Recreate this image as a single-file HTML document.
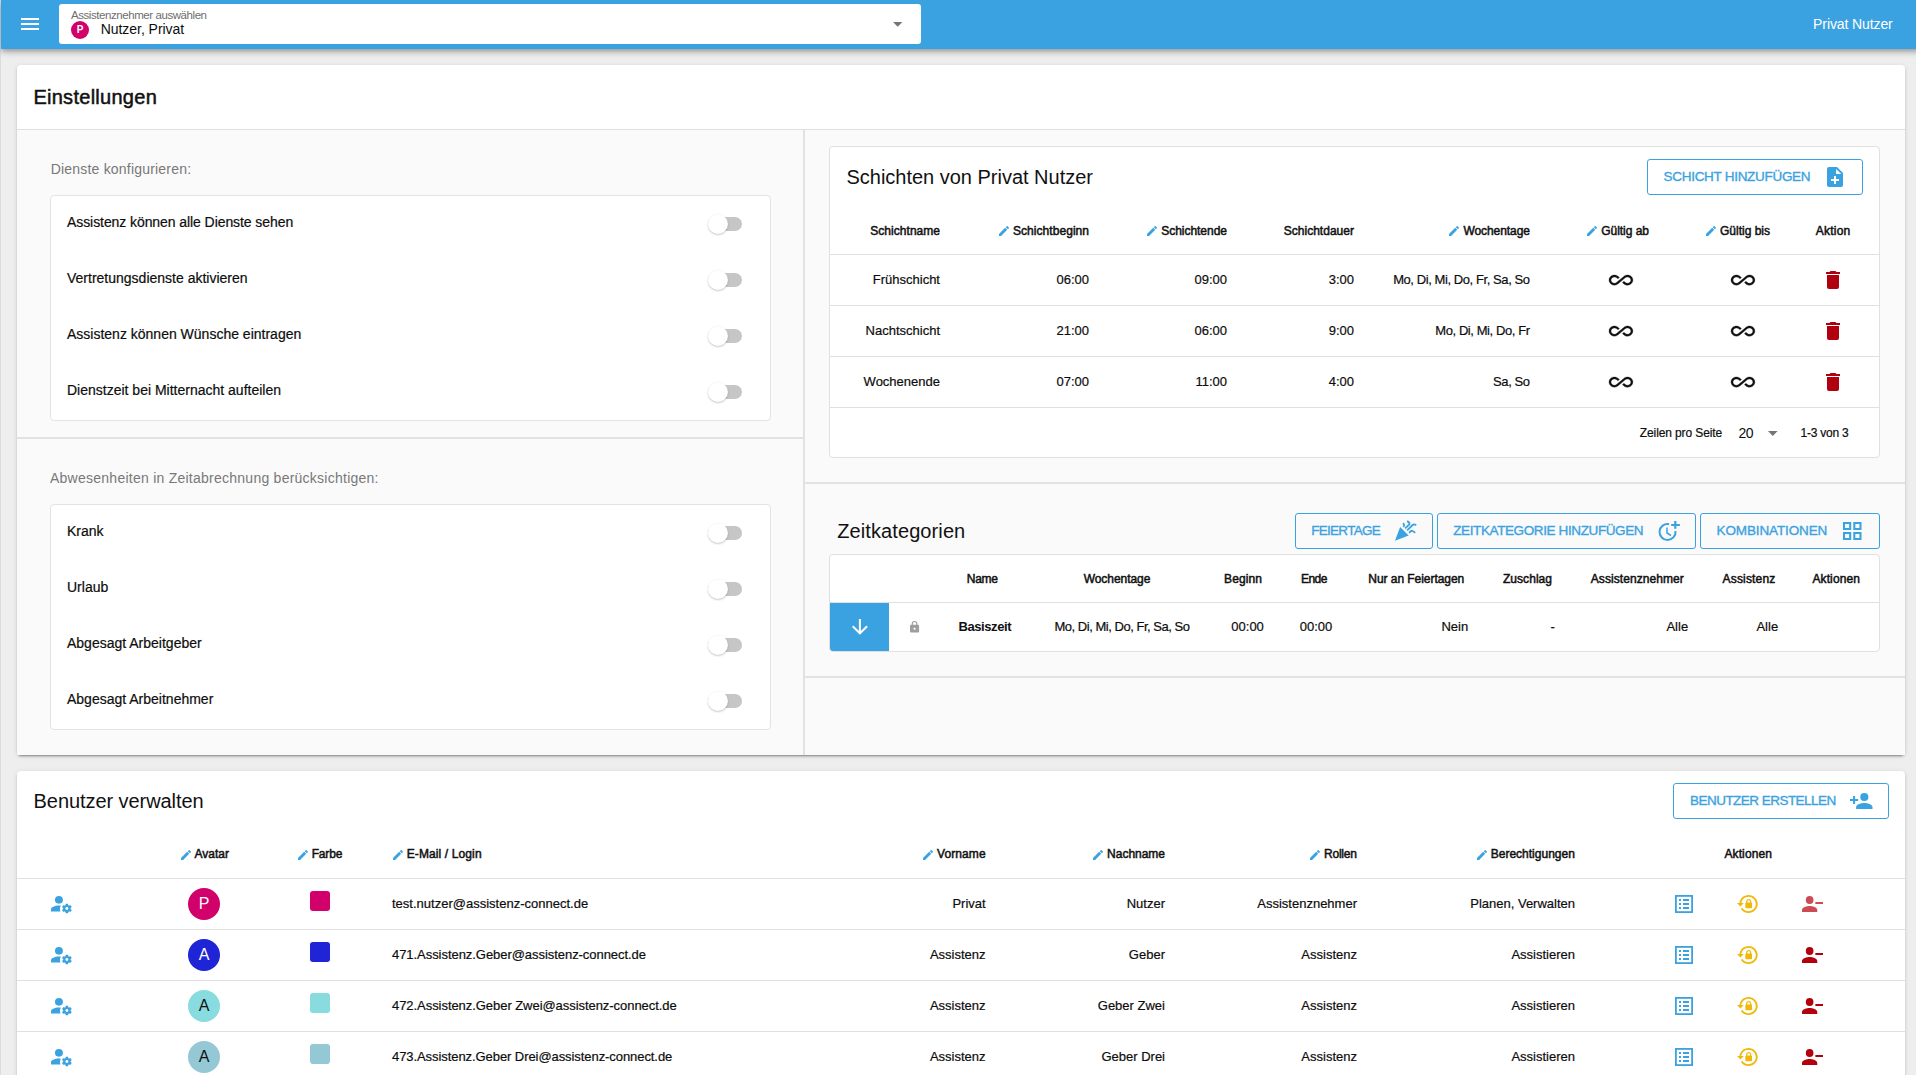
<!DOCTYPE html><html><head><meta charset="utf-8"><style>
html,body{margin:0;padding:0;}
body{width:1916px;height:1075px;overflow:hidden;position:relative;background:#eeeeee;font-family:"Liberation Sans",sans-serif;}
.t{position:absolute;white-space:nowrap;line-height:1;}
.tog{position:absolute;}
</style></head><body>
<div style="position:absolute;left:0px;top:0px;width:1px;height:1075px;background:#d6dde3;"></div>
<div style="position:absolute;left:1px;top:0px;width:1940px;height:49px;background:#3ba2e1;box-shadow:0 2px 4px -1px rgba(0,0,0,.2),0 4px 5px 0 rgba(0,0,0,.14),0 1px 10px 0 rgba(0,0,0,.12);z-index:5;"></div>
<div style="position:absolute;left:0;top:0;width:1916px;height:48px;z-index:6;">
<svg style="position:absolute;left:21.00px;top:18.00px;overflow:visible;" width="18.00" height="12.00" viewBox="3 6 18 12" preserveAspectRatio="none"><path fill="#ffffff" fill-rule="evenodd" stroke="none" stroke-width="0" d="M3,6H21V8H3V6M3,11H21V13H3V11M3,16H21V18H3V16Z"/></svg>
<div style="position:absolute;left:59px;top:4px;width:862px;height:40px;background:#fff;border-radius:3px;"></div>
<div class="t" style="left:71.00px;top:9.57px;font-size:11.5px;letter-spacing:-0.433px;color:#6e6e6e;">Assistenznehmer auswählen</div>
<div style="position:absolute;left:71px;top:21px;width:18px;height:18px;background:#d1006a;border-radius:50%;"></div>
<div class="t" style="left:76.67px;top:25.04px;font-size:10px;letter-spacing:0.000px;color:#fff;font-weight:700;">P</div>
<div class="t" style="left:100.70px;top:22.05px;font-size:14px;letter-spacing:-0.038px;color:#0d0d0d;-webkit-text-stroke:0;">Nutzer, Privat</div>
<svg style="position:absolute;left:892.80px;top:22.00px;overflow:visible;" width="9.40" height="4.80" viewBox="7 10 10 5" preserveAspectRatio="none"><path fill="#757575" fill-rule="evenodd" stroke="none" stroke-width="0" d="M7,10L12,15L17,10H7Z"/></svg>
<div class="t" style="left:1813.10px;top:17.15px;font-size:14px;letter-spacing:-0.102px;color:#ffffff;">Privat Nutzer</div>
</div>
<div style="position:absolute;left:17px;top:65px;width:1888px;height:690px;background:#fff;border-radius:4px;box-shadow:0 3px 1px -2px rgba(0,0,0,.2),0 2px 2px 0 rgba(0,0,0,.14),0 1px 5px 0 rgba(0,0,0,.12);"></div>
<div class="t" style="left:33.40px;top:87.07px;font-size:20px;letter-spacing:0.275px;color:#111;-webkit-text-stroke:0.5px #111;">Einstellungen</div>
<div style="position:absolute;left:17px;top:129px;width:1888px;height:626px;background:#fafafa;border-top:1px solid #e0e0e0;border-radius:0;box-sizing:border-box;"></div>
<div style="position:absolute;left:803px;top:130px;width:2px;height:625px;background:#e2e2e2;"></div>
<div style="position:absolute;left:17px;top:437px;width:786px;height:2px;background:#e2e2e2;"></div>
<div style="position:absolute;left:805px;top:482px;width:1100px;height:2px;background:#e2e2e2;"></div>
<div style="position:absolute;left:805px;top:676px;width:1100px;height:2px;background:#e2e2e2;"></div>
<div class="t" style="left:50.70px;top:161.95px;font-size:14px;letter-spacing:0.199px;color:#787878;">Dienste konfigurieren:</div>
<div style="position:absolute;left:50px;top:195px;width:721px;height:226px;background:#fff;border:1px solid #e3e3e3;border-radius:4px;box-sizing:border-box;"></div>
<div class="t" style="left:67.00px;top:215.15px;font-size:14px;letter-spacing:-0.077px;color:#0d0d0d;-webkit-text-stroke:0.2px #0d0d0d;">Assistenz können alle Dienste sehen</div>
<div style="position:absolute;left:712px;top:217px;width:30px;height:14px;background:#c6c6c6;border-radius:7px;"></div>
<div style="position:absolute;left:708px;top:214px;width:20px;height:20px;background:#fff;border-radius:50%;box-shadow:0 1px 2px rgba(0,0,0,.22),0 0 1px rgba(0,0,0,.06);"></div>
<div class="t" style="left:67.00px;top:271.15px;font-size:14px;letter-spacing:0.000px;color:#0d0d0d;-webkit-text-stroke:0.2px #0d0d0d;">Vertretungsdienste aktivieren</div>
<div style="position:absolute;left:712px;top:273px;width:30px;height:14px;background:#c6c6c6;border-radius:7px;"></div>
<div style="position:absolute;left:708px;top:270px;width:20px;height:20px;background:#fff;border-radius:50%;box-shadow:0 1px 2px rgba(0,0,0,.22),0 0 1px rgba(0,0,0,.06);"></div>
<div class="t" style="left:67.00px;top:327.15px;font-size:14px;letter-spacing:0.000px;color:#0d0d0d;-webkit-text-stroke:0.2px #0d0d0d;">Assistenz können Wünsche eintragen</div>
<div style="position:absolute;left:712px;top:329px;width:30px;height:14px;background:#c6c6c6;border-radius:7px;"></div>
<div style="position:absolute;left:708px;top:326px;width:20px;height:20px;background:#fff;border-radius:50%;box-shadow:0 1px 2px rgba(0,0,0,.22),0 0 1px rgba(0,0,0,.06);"></div>
<div class="t" style="left:67.00px;top:383.15px;font-size:14px;letter-spacing:0.000px;color:#0d0d0d;-webkit-text-stroke:0.2px #0d0d0d;">Dienstzeit bei Mitternacht aufteilen</div>
<div style="position:absolute;left:712px;top:385px;width:30px;height:14px;background:#c6c6c6;border-radius:7px;"></div>
<div style="position:absolute;left:708px;top:382px;width:20px;height:20px;background:#fff;border-radius:50%;box-shadow:0 1px 2px rgba(0,0,0,.22),0 0 1px rgba(0,0,0,.06);"></div>
<div class="t" style="left:50.00px;top:470.85px;font-size:14px;letter-spacing:0.250px;color:#787878;">Abwesenheiten in Zeitabrechnung berücksichtigen:</div>
<div style="position:absolute;left:50px;top:504px;width:721px;height:226px;background:#fff;border:1px solid #e3e3e3;border-radius:4px;box-sizing:border-box;"></div>
<div class="t" style="left:67.00px;top:524.15px;font-size:14px;letter-spacing:0.000px;color:#0d0d0d;-webkit-text-stroke:0.2px #0d0d0d;">Krank</div>
<div style="position:absolute;left:712px;top:526px;width:30px;height:14px;background:#c6c6c6;border-radius:7px;"></div>
<div style="position:absolute;left:708px;top:523px;width:20px;height:20px;background:#fff;border-radius:50%;box-shadow:0 1px 2px rgba(0,0,0,.22),0 0 1px rgba(0,0,0,.06);"></div>
<div class="t" style="left:67.00px;top:580.15px;font-size:14px;letter-spacing:0.000px;color:#0d0d0d;-webkit-text-stroke:0.2px #0d0d0d;">Urlaub</div>
<div style="position:absolute;left:712px;top:582px;width:30px;height:14px;background:#c6c6c6;border-radius:7px;"></div>
<div style="position:absolute;left:708px;top:579px;width:20px;height:20px;background:#fff;border-radius:50%;box-shadow:0 1px 2px rgba(0,0,0,.22),0 0 1px rgba(0,0,0,.06);"></div>
<div class="t" style="left:67.00px;top:636.15px;font-size:14px;letter-spacing:0.000px;color:#0d0d0d;-webkit-text-stroke:0.2px #0d0d0d;">Abgesagt Arbeitgeber</div>
<div style="position:absolute;left:712px;top:638px;width:30px;height:14px;background:#c6c6c6;border-radius:7px;"></div>
<div style="position:absolute;left:708px;top:635px;width:20px;height:20px;background:#fff;border-radius:50%;box-shadow:0 1px 2px rgba(0,0,0,.22),0 0 1px rgba(0,0,0,.06);"></div>
<div class="t" style="left:67.00px;top:692.15px;font-size:14px;letter-spacing:0.000px;color:#0d0d0d;-webkit-text-stroke:0.2px #0d0d0d;">Abgesagt Arbeitnehmer</div>
<div style="position:absolute;left:712px;top:694px;width:30px;height:14px;background:#c6c6c6;border-radius:7px;"></div>
<div style="position:absolute;left:708px;top:691px;width:20px;height:20px;background:#fff;border-radius:50%;box-shadow:0 1px 2px rgba(0,0,0,.22),0 0 1px rgba(0,0,0,.06);"></div>
<div style="position:absolute;left:829px;top:146px;width:1051px;height:312px;background:#fff;border:1px solid #e0e0e0;border-radius:4px;box-sizing:border-box;"></div>
<div class="t" style="left:846.50px;top:167.07px;font-size:20px;letter-spacing:-0.012px;color:#111;">Schichten von Privat Nutzer</div>
<div style="position:absolute;left:1647px;top:159px;width:216px;height:36px;border:1px solid #3ba2e1;border-radius:3px;box-sizing:border-box;"></div>
<div class="t" style="left:1663.60px;top:169.87px;font-size:13.5px;letter-spacing:-0.295px;color:#3ba2e1;-webkit-text-stroke:0.35px #3ba2e1;">SCHICHT HINZUFÜGEN</div>
<svg style="position:absolute;left:1827px;top:167px" width="16" height="20" viewBox="0 0 16 20"><path fill="#3ba2e1" d="M2,0H10L16,6V18A2,2 0 0,1 14,20H2A2,2 0 0,1 0,18V2A2,2 0 0,1 2,0Z"/><path fill="#fff" d="M7,9H9V12H12V14H9V17H7V14H4V12H7Z"/><path fill="#fff" d="M9.1,1.9V6.9H14.3Z"/></svg>
<div class="t" style="left:870.30px;top:224.64px;font-size:12px;letter-spacing:0.034px;color:#111;-webkit-text-stroke:0.5px #111;">Schichtname</div>
<svg style="position:absolute;left:998.60px;top:226.00px;overflow:visible;" width="10.00" height="10.00" viewBox="3 3.0 18.0 18.0" preserveAspectRatio="none"><path fill="#3ba2e1" fill-rule="evenodd" stroke="none" stroke-width="0" d="M20.71,7.04C21.1,6.65 21.1,6 20.71,5.63L18.37,3.29C18,2.9 17.35,2.9 16.96,3.29L15.12,5.12L18.87,8.87M3,17.25V21H6.75L17.81,9.93L14.06,6.18L3,17.25Z"/></svg>
<div class="t" style="left:1013.00px;top:224.64px;font-size:12px;letter-spacing:0.053px;color:#111;-webkit-text-stroke:0.5px #111;">Schichtbeginn</div>
<svg style="position:absolute;left:1147.00px;top:226.00px;overflow:visible;" width="10.00" height="10.00" viewBox="3 3.0 18.0 18.0" preserveAspectRatio="none"><path fill="#3ba2e1" fill-rule="evenodd" stroke="none" stroke-width="0" d="M20.71,7.04C21.1,6.65 21.1,6 20.71,5.63L18.37,3.29C18,2.9 17.35,2.9 16.96,3.29L15.12,5.12L18.87,8.87M3,17.25V21H6.75L17.81,9.93L14.06,6.18L3,17.25Z"/></svg>
<div class="t" style="left:1161.20px;top:224.64px;font-size:12px;letter-spacing:-0.026px;color:#111;-webkit-text-stroke:0.5px #111;">Schichtende</div>
<div class="t" style="left:1283.70px;top:224.64px;font-size:12px;letter-spacing:0.025px;color:#111;-webkit-text-stroke:0.5px #111;">Schichtdauer</div>
<svg style="position:absolute;left:1449.30px;top:226.00px;overflow:visible;" width="10.00" height="10.00" viewBox="3 3.0 18.0 18.0" preserveAspectRatio="none"><path fill="#3ba2e1" fill-rule="evenodd" stroke="none" stroke-width="0" d="M20.71,7.04C21.1,6.65 21.1,6 20.71,5.63L18.37,3.29C18,2.9 17.35,2.9 16.96,3.29L15.12,5.12L18.87,8.87M3,17.25V21H6.75L17.81,9.93L14.06,6.18L3,17.25Z"/></svg>
<div class="t" style="left:1463.40px;top:224.64px;font-size:12px;letter-spacing:-0.060px;color:#111;-webkit-text-stroke:0.5px #111;">Wochentage</div>
<svg style="position:absolute;left:1587.00px;top:226.00px;overflow:visible;" width="10.00" height="10.00" viewBox="3 3.0 18.0 18.0" preserveAspectRatio="none"><path fill="#3ba2e1" fill-rule="evenodd" stroke="none" stroke-width="0" d="M20.71,7.04C21.1,6.65 21.1,6 20.71,5.63L18.37,3.29C18,2.9 17.35,2.9 16.96,3.29L15.12,5.12L18.87,8.87M3,17.25V21H6.75L17.81,9.93L14.06,6.18L3,17.25Z"/></svg>
<div class="t" style="left:1601.30px;top:224.64px;font-size:12px;letter-spacing:-0.045px;color:#111;-webkit-text-stroke:0.5px #111;">Gültig ab</div>
<svg style="position:absolute;left:1706.00px;top:226.00px;overflow:visible;" width="10.00" height="10.00" viewBox="3 3.0 18.0 18.0" preserveAspectRatio="none"><path fill="#3ba2e1" fill-rule="evenodd" stroke="none" stroke-width="0" d="M20.71,7.04C21.1,6.65 21.1,6 20.71,5.63L18.37,3.29C18,2.9 17.35,2.9 16.96,3.29L15.12,5.12L18.87,8.87M3,17.25V21H6.75L17.81,9.93L14.06,6.18L3,17.25Z"/></svg>
<div class="t" style="left:1720.00px;top:224.64px;font-size:12px;letter-spacing:-0.004px;color:#111;-webkit-text-stroke:0.5px #111;">Gültig bis</div>
<div class="t" style="left:1815.80px;top:224.64px;font-size:12px;letter-spacing:0.208px;color:#111;-webkit-text-stroke:0.5px #111;">Aktion</div>
<div style="position:absolute;left:830px;top:254px;width:1049px;height:1px;background:#e0e0e0;"></div>
<div style="position:absolute;left:830px;top:305px;width:1049px;height:1px;background:#e0e0e0;"></div>
<div style="position:absolute;left:830px;top:356px;width:1049px;height:1px;background:#e0e0e0;"></div>
<div style="position:absolute;left:830px;top:407px;width:1049px;height:1px;background:#e0e0e0;"></div>
<div class="t" style="left:872.79px;top:273.00px;font-size:13px;letter-spacing:0.000px;color:#0d0d0d;-webkit-text-stroke:0.2px #0d0d0d;">Frühschicht</div>
<div class="t" style="left:1056.43px;top:273.00px;font-size:13px;letter-spacing:0.000px;color:#0d0d0d;-webkit-text-stroke:0.2px #0d0d0d;">06:00</div>
<div class="t" style="left:1194.43px;top:273.00px;font-size:13px;letter-spacing:0.000px;color:#0d0d0d;-webkit-text-stroke:0.2px #0d0d0d;">09:00</div>
<div class="t" style="left:1328.71px;top:273.00px;font-size:13px;letter-spacing:0.000px;color:#0d0d0d;-webkit-text-stroke:0.2px #0d0d0d;">3:00</div>
<div class="t" style="left:1393.14px;top:273.00px;font-size:13px;letter-spacing:-0.420px;color:#0d0d0d;-webkit-text-stroke:0.2px #0d0d0d;">Mo, Di, Mi, Do, Fr, Sa, So</div>
<svg style="position:absolute;left:1609.10px;top:274.70px;overflow:visible;" width="23.90" height="10.20" viewBox="0 6.62 24 10.759999999999998" preserveAspectRatio="none"><path fill="#111" fill-rule="evenodd" stroke="#111" stroke-width="0.35" d="M18.6,6.62C17.16,6.62 15.8,7.18 14.83,8.15L7.8,14.39C7.16,15.03 6.31,15.38 5.4,15.38C3.53,15.38 2,13.87 2,12C2,10.13 3.53,8.62 5.4,8.62C6.31,8.62 7.16,8.97 7.84,9.65L8.97,10.65L10.5,9.31L9.22,8.2C8.2,7.18 6.84,6.62 5.4,6.62C2.42,6.62 0,9.04 0,12C0,14.96 2.42,17.38 5.4,17.38C6.84,17.38 8.2,16.82 9.17,15.85L16.2,9.61C16.84,8.97 17.69,8.62 18.6,8.62C20.47,8.62 22,10.13 22,12C22,13.87 20.47,15.38 18.6,15.38C17.7,15.38 16.84,15.03 16.16,14.35L15,13.34L13.5,14.68L14.78,15.8C15.8,16.81 17.15,17.37 18.6,17.37C21.58,17.37 24,14.96 24,12C24,9 21.58,6.62 18.6,6.62Z"/></svg>
<svg style="position:absolute;left:1731.10px;top:274.70px;overflow:visible;" width="23.90" height="10.20" viewBox="0 6.62 24 10.759999999999998" preserveAspectRatio="none"><path fill="#111" fill-rule="evenodd" stroke="#111" stroke-width="0.35" d="M18.6,6.62C17.16,6.62 15.8,7.18 14.83,8.15L7.8,14.39C7.16,15.03 6.31,15.38 5.4,15.38C3.53,15.38 2,13.87 2,12C2,10.13 3.53,8.62 5.4,8.62C6.31,8.62 7.16,8.97 7.84,9.65L8.97,10.65L10.5,9.31L9.22,8.2C8.2,7.18 6.84,6.62 5.4,6.62C2.42,6.62 0,9.04 0,12C0,14.96 2.42,17.38 5.4,17.38C6.84,17.38 8.2,16.82 9.17,15.85L16.2,9.61C16.84,8.97 17.69,8.62 18.6,8.62C20.47,8.62 22,10.13 22,12C22,13.87 20.47,15.38 18.6,15.38C17.7,15.38 16.84,15.03 16.16,14.35L15,13.34L13.5,14.68L14.78,15.8C15.8,16.81 17.15,17.37 18.6,17.37C21.58,17.37 24,14.96 24,12C24,9 21.58,6.62 18.6,6.62Z"/></svg>
<svg style="position:absolute;left:1826.00px;top:271.00px;overflow:visible;" width="14.00" height="18.00" viewBox="5 3 14 18" preserveAspectRatio="none"><path fill="#b0000f" fill-rule="evenodd" stroke="none" stroke-width="0" d="M19,4H15.5L14.5,3H9.5L8.5,4H5V6H19M6,19A2,2 0 0,0 8,21H16A2,2 0 0,0 18,19V7H6V19Z"/></svg>
<div class="t" style="left:865.58px;top:324.00px;font-size:13px;letter-spacing:0.000px;color:#0d0d0d;-webkit-text-stroke:0.2px #0d0d0d;">Nachtschicht</div>
<div class="t" style="left:1056.43px;top:324.00px;font-size:13px;letter-spacing:0.000px;color:#0d0d0d;-webkit-text-stroke:0.2px #0d0d0d;">21:00</div>
<div class="t" style="left:1194.43px;top:324.00px;font-size:13px;letter-spacing:0.000px;color:#0d0d0d;-webkit-text-stroke:0.2px #0d0d0d;">06:00</div>
<div class="t" style="left:1328.71px;top:324.00px;font-size:13px;letter-spacing:0.000px;color:#0d0d0d;-webkit-text-stroke:0.2px #0d0d0d;">9:00</div>
<div class="t" style="left:1435.29px;top:324.00px;font-size:13px;letter-spacing:-0.420px;color:#0d0d0d;-webkit-text-stroke:0.2px #0d0d0d;">Mo, Di, Mi, Do, Fr</div>
<svg style="position:absolute;left:1609.10px;top:325.70px;overflow:visible;" width="23.90" height="10.20" viewBox="0 6.62 24 10.759999999999998" preserveAspectRatio="none"><path fill="#111" fill-rule="evenodd" stroke="#111" stroke-width="0.35" d="M18.6,6.62C17.16,6.62 15.8,7.18 14.83,8.15L7.8,14.39C7.16,15.03 6.31,15.38 5.4,15.38C3.53,15.38 2,13.87 2,12C2,10.13 3.53,8.62 5.4,8.62C6.31,8.62 7.16,8.97 7.84,9.65L8.97,10.65L10.5,9.31L9.22,8.2C8.2,7.18 6.84,6.62 5.4,6.62C2.42,6.62 0,9.04 0,12C0,14.96 2.42,17.38 5.4,17.38C6.84,17.38 8.2,16.82 9.17,15.85L16.2,9.61C16.84,8.97 17.69,8.62 18.6,8.62C20.47,8.62 22,10.13 22,12C22,13.87 20.47,15.38 18.6,15.38C17.7,15.38 16.84,15.03 16.16,14.35L15,13.34L13.5,14.68L14.78,15.8C15.8,16.81 17.15,17.37 18.6,17.37C21.58,17.37 24,14.96 24,12C24,9 21.58,6.62 18.6,6.62Z"/></svg>
<svg style="position:absolute;left:1731.10px;top:325.70px;overflow:visible;" width="23.90" height="10.20" viewBox="0 6.62 24 10.759999999999998" preserveAspectRatio="none"><path fill="#111" fill-rule="evenodd" stroke="#111" stroke-width="0.35" d="M18.6,6.62C17.16,6.62 15.8,7.18 14.83,8.15L7.8,14.39C7.16,15.03 6.31,15.38 5.4,15.38C3.53,15.38 2,13.87 2,12C2,10.13 3.53,8.62 5.4,8.62C6.31,8.62 7.16,8.97 7.84,9.65L8.97,10.65L10.5,9.31L9.22,8.2C8.2,7.18 6.84,6.62 5.4,6.62C2.42,6.62 0,9.04 0,12C0,14.96 2.42,17.38 5.4,17.38C6.84,17.38 8.2,16.82 9.17,15.85L16.2,9.61C16.84,8.97 17.69,8.62 18.6,8.62C20.47,8.62 22,10.13 22,12C22,13.87 20.47,15.38 18.6,15.38C17.7,15.38 16.84,15.03 16.16,14.35L15,13.34L13.5,14.68L14.78,15.8C15.8,16.81 17.15,17.37 18.6,17.37C21.58,17.37 24,14.96 24,12C24,9 21.58,6.62 18.6,6.62Z"/></svg>
<svg style="position:absolute;left:1826.00px;top:322.00px;overflow:visible;" width="14.00" height="18.00" viewBox="5 3 14 18" preserveAspectRatio="none"><path fill="#b0000f" fill-rule="evenodd" stroke="none" stroke-width="0" d="M19,4H15.5L14.5,3H9.5L8.5,4H5V6H19M6,19A2,2 0 0,0 8,21H16A2,2 0 0,0 18,19V7H6V19Z"/></svg>
<div class="t" style="left:863.62px;top:375.00px;font-size:13px;letter-spacing:0.000px;color:#0d0d0d;-webkit-text-stroke:0.2px #0d0d0d;">Wochenende</div>
<div class="t" style="left:1056.43px;top:375.00px;font-size:13px;letter-spacing:0.000px;color:#0d0d0d;-webkit-text-stroke:0.2px #0d0d0d;">07:00</div>
<div class="t" style="left:1195.41px;top:375.00px;font-size:13px;letter-spacing:0.000px;color:#0d0d0d;-webkit-text-stroke:0.2px #0d0d0d;">11:00</div>
<div class="t" style="left:1328.71px;top:375.00px;font-size:13px;letter-spacing:0.000px;color:#0d0d0d;-webkit-text-stroke:0.2px #0d0d0d;">4:00</div>
<div class="t" style="left:1493.10px;top:375.00px;font-size:13px;letter-spacing:-0.420px;color:#0d0d0d;-webkit-text-stroke:0.2px #0d0d0d;">Sa, So</div>
<svg style="position:absolute;left:1609.10px;top:376.70px;overflow:visible;" width="23.90" height="10.20" viewBox="0 6.62 24 10.759999999999998" preserveAspectRatio="none"><path fill="#111" fill-rule="evenodd" stroke="#111" stroke-width="0.35" d="M18.6,6.62C17.16,6.62 15.8,7.18 14.83,8.15L7.8,14.39C7.16,15.03 6.31,15.38 5.4,15.38C3.53,15.38 2,13.87 2,12C2,10.13 3.53,8.62 5.4,8.62C6.31,8.62 7.16,8.97 7.84,9.65L8.97,10.65L10.5,9.31L9.22,8.2C8.2,7.18 6.84,6.62 5.4,6.62C2.42,6.62 0,9.04 0,12C0,14.96 2.42,17.38 5.4,17.38C6.84,17.38 8.2,16.82 9.17,15.85L16.2,9.61C16.84,8.97 17.69,8.62 18.6,8.62C20.47,8.62 22,10.13 22,12C22,13.87 20.47,15.38 18.6,15.38C17.7,15.38 16.84,15.03 16.16,14.35L15,13.34L13.5,14.68L14.78,15.8C15.8,16.81 17.15,17.37 18.6,17.37C21.58,17.37 24,14.96 24,12C24,9 21.58,6.62 18.6,6.62Z"/></svg>
<svg style="position:absolute;left:1731.10px;top:376.70px;overflow:visible;" width="23.90" height="10.20" viewBox="0 6.62 24 10.759999999999998" preserveAspectRatio="none"><path fill="#111" fill-rule="evenodd" stroke="#111" stroke-width="0.35" d="M18.6,6.62C17.16,6.62 15.8,7.18 14.83,8.15L7.8,14.39C7.16,15.03 6.31,15.38 5.4,15.38C3.53,15.38 2,13.87 2,12C2,10.13 3.53,8.62 5.4,8.62C6.31,8.62 7.16,8.97 7.84,9.65L8.97,10.65L10.5,9.31L9.22,8.2C8.2,7.18 6.84,6.62 5.4,6.62C2.42,6.62 0,9.04 0,12C0,14.96 2.42,17.38 5.4,17.38C6.84,17.38 8.2,16.82 9.17,15.85L16.2,9.61C16.84,8.97 17.69,8.62 18.6,8.62C20.47,8.62 22,10.13 22,12C22,13.87 20.47,15.38 18.6,15.38C17.7,15.38 16.84,15.03 16.16,14.35L15,13.34L13.5,14.68L14.78,15.8C15.8,16.81 17.15,17.37 18.6,17.37C21.58,17.37 24,14.96 24,12C24,9 21.58,6.62 18.6,6.62Z"/></svg>
<svg style="position:absolute;left:1826.00px;top:373.00px;overflow:visible;" width="14.00" height="18.00" viewBox="5 3 14 18" preserveAspectRatio="none"><path fill="#b0000f" fill-rule="evenodd" stroke="none" stroke-width="0" d="M19,4H15.5L14.5,3H9.5L8.5,4H5V6H19M6,19A2,2 0 0,0 8,21H16A2,2 0 0,0 18,19V7H6V19Z"/></svg>
<div class="t" style="left:1639.80px;top:427.44px;font-size:12px;letter-spacing:-0.111px;color:#0d0d0d;-webkit-text-stroke:0.2px #0d0d0d;">Zeilen pro Seite</div>
<div class="t" style="left:1738.60px;top:425.75px;font-size:14px;letter-spacing:-0.540px;color:#0d0d0d;-webkit-text-stroke:0;">20</div>
<svg style="position:absolute;left:1767.70px;top:431.00px;overflow:visible;" width="9.60" height="5.00" viewBox="7 10 10 5" preserveAspectRatio="none"><path fill="#757575" fill-rule="evenodd" stroke="none" stroke-width="0" d="M7,10L12,15L17,10H7Z"/></svg>
<div class="t" style="left:1800.50px;top:427.44px;font-size:12px;letter-spacing:-0.230px;color:#0d0d0d;-webkit-text-stroke:0.2px #0d0d0d;">1-3 von 3</div>
<div class="t" style="left:837.20px;top:521.07px;font-size:20px;letter-spacing:0.100px;color:#111;">Zeitkategorien</div>
<div style="position:absolute;left:1295px;top:513px;width:138px;height:36px;border:1px solid #3ba2e1;border-radius:3px;box-sizing:border-box;"></div>
<div class="t" style="left:1311.20px;top:523.87px;font-size:13.5px;letter-spacing:-0.708px;color:#3ba2e1;-webkit-text-stroke:0.35px #3ba2e1;">FEIERTAGE</div>
<div style="position:absolute;left:1437px;top:513px;width:259px;height:36px;border:1px solid #3ba2e1;border-radius:3px;box-sizing:border-box;"></div>
<div class="t" style="left:1453.20px;top:523.87px;font-size:13.5px;letter-spacing:-0.385px;color:#3ba2e1;-webkit-text-stroke:0.35px #3ba2e1;">ZEITKATEGORIE HINZUFÜGEN</div>
<div style="position:absolute;left:1700px;top:513px;width:180px;height:36px;border:1px solid #3ba2e1;border-radius:3px;box-sizing:border-box;"></div>
<div class="t" style="left:1716.50px;top:523.87px;font-size:13.5px;letter-spacing:-0.121px;color:#3ba2e1;-webkit-text-stroke:0.35px #3ba2e1;">KOMBINATIONEN</div>
<svg style="position:absolute;left:1843.00px;top:522.00px;overflow:visible;" width="18.50" height="18.00" viewBox="3 3 18 18" preserveAspectRatio="none"><path fill="#3ba2e1" fill-rule="evenodd" stroke="none" stroke-width="0" d="M3,11H11V3H3M5,5H9V9H5M13,21H21V13H13M15,15H19V19H15M3,21H11V13H3M5,15H9V19H5M13,3V11H21V3M19,9H15V5H19Z"/></svg>
<svg style="position:absolute;left:1394px;top:520px;overflow:visible" width="24" height="22" viewBox="0 0 24 22"><path fill="#3ba2e1" d="M1,20.8L6.1,7.1L14.6,15.4Z"/><path fill="none" stroke="#3ba2e1" stroke-width="1.8" stroke-linecap="butt" d="M8.8,3.2C10.4,4 10.6,5.6 9.3,6.8M13.1,1.1C14.8,2 16,3.2 15.3,4.5L11.1,8.4M13.1,10.4L18.6,5C19.6,4.2 21,4.4 22.2,5.4M15.1,12.8C16.3,11.4 17.4,10.6 18.3,10.8C19.4,11 20.4,12 21.1,12.8"/></svg>
<svg style="position:absolute;left:1657px;top:520px" width="24" height="22" viewBox="0 0 24 22"><path fill="none" stroke="#3ba2e1" stroke-width="2" d="M18.5,11A8,8 0 1,1 12,4.1"/><path fill="none" stroke="#3ba2e1" stroke-width="1.5" d="M10,7.5V13L14,15.5"/><path fill="#3ba2e1" d="M17.2,1H19.4V3.9H22.9V5.9H19.4V8.7H17.2V5.9H14.2V3.9H17.2Z"/></svg>
<div style="position:absolute;left:829px;top:554px;width:1051px;height:98px;background:#fff;border:1px solid #e0e0e0;border-radius:4px;box-sizing:border-box;"></div>
<div style="position:absolute;left:830px;top:602px;width:1049px;height:1px;background:#e0e0e0;"></div>
<div class="t" style="left:966.75px;top:572.54px;font-size:12px;letter-spacing:-0.247px;color:#111;-webkit-text-stroke:0.5px #111;">Name</div>
<div class="t" style="left:1083.65px;top:572.54px;font-size:12px;letter-spacing:-0.049px;color:#111;-webkit-text-stroke:0.5px #111;">Wochentage</div>
<div class="t" style="left:1224.10px;top:572.54px;font-size:12px;letter-spacing:0.084px;color:#111;-webkit-text-stroke:0.5px #111;">Beginn</div>
<div class="t" style="left:1300.95px;top:572.54px;font-size:12px;letter-spacing:-0.507px;color:#111;-webkit-text-stroke:0.5px #111;">Ende</div>
<div class="t" style="left:1368.35px;top:572.54px;font-size:12px;letter-spacing:-0.051px;color:#111;-webkit-text-stroke:0.5px #111;">Nur an Feiertagen</div>
<div class="t" style="left:1502.95px;top:572.54px;font-size:12px;letter-spacing:0.054px;color:#111;-webkit-text-stroke:0.5px #111;">Zuschlag</div>
<div class="t" style="left:1590.75px;top:572.54px;font-size:12px;letter-spacing:0.076px;color:#111;-webkit-text-stroke:0.5px #111;">Assistenznehmer</div>
<div class="t" style="left:1722.55px;top:572.54px;font-size:12px;letter-spacing:0.168px;color:#111;-webkit-text-stroke:0.5px #111;">Assistenz</div>
<div class="t" style="left:1812.40px;top:572.54px;font-size:12px;letter-spacing:0.131px;color:#111;-webkit-text-stroke:0.5px #111;">Aktionen</div>
<div style="position:absolute;left:830px;top:603px;width:59px;height:48px;background:#3ba2e1;border-radius:0 0 0 3px;"></div>
<svg style="position:absolute;left:851.60px;top:618.80px;overflow:visible;" width="15.80" height="15.80" viewBox="4.08 4 15.840000000000002 15.84" preserveAspectRatio="none"><path fill="#fff" fill-rule="evenodd" stroke="none" stroke-width="0" d="M11,4H13V16L18.5,10.5L19.92,11.92L12,19.84L4.08,11.92L5.5,10.5L11,16V4Z"/></svg>
<svg style="position:absolute;left:909.90px;top:621.30px;overflow:visible;" width="9.10" height="11.60" viewBox="4 1 16 21" preserveAspectRatio="none"><path fill="#9e9e9e" fill-rule="evenodd" stroke="none" stroke-width="0" d="M12,17A2,2 0 0,0 14,15C14,13.89 13.1,13 12,13A2,2 0 0,0 10,15A2,2 0 0,0 12,17M18,8A2,2 0 0,1 20,10V20A2,2 0 0,1 18,22H6A2,2 0 0,1 4,20V10C4,8.89 4.9,8 6,8H7V6A5,5 0 0,1 12,1A5,5 0 0,1 17,6V8H18M12,3A3,3 0 0,0 9,6V8H15V6A3,3 0 0,0 12,3Z"/></svg>
<div class="t" style="left:958.50px;top:620.00px;font-size:13px;letter-spacing:-0.419px;color:#111;font-weight:700;">Basiszeit</div>
<div class="t" style="left:1054.45px;top:620.00px;font-size:13px;letter-spacing:-0.474px;color:#0d0d0d;-webkit-text-stroke:0.2px #0d0d0d;">Mo, Di, Mi, Do, Fr, Sa, So</div>
<div class="t" style="left:1231.32px;top:620.00px;font-size:13px;letter-spacing:0.000px;color:#0d0d0d;-webkit-text-stroke:0.2px #0d0d0d;">00:00</div>
<div class="t" style="left:1299.72px;top:620.00px;font-size:13px;letter-spacing:0.000px;color:#0d0d0d;-webkit-text-stroke:0.2px #0d0d0d;">00:00</div>
<div class="t" style="left:1441.44px;top:620.00px;font-size:13px;letter-spacing:0.000px;color:#0d0d0d;-webkit-text-stroke:0.2px #0d0d0d;">Nein</div>
<div class="t" style="left:1550.62px;top:620.00px;font-size:13px;letter-spacing:0.000px;color:#0d0d0d;-webkit-text-stroke:0.2px #0d0d0d;">-</div>
<div class="t" style="left:1666.44px;top:620.00px;font-size:13px;letter-spacing:0.000px;color:#0d0d0d;-webkit-text-stroke:0.2px #0d0d0d;">Alle</div>
<div class="t" style="left:1756.44px;top:620.00px;font-size:13px;letter-spacing:0.000px;color:#0d0d0d;-webkit-text-stroke:0.2px #0d0d0d;">Alle</div>
<div style="position:absolute;left:17px;top:771px;width:1888px;height:400px;background:#fff;border-radius:4px;box-shadow:0 3px 1px -2px rgba(0,0,0,.2),0 2px 2px 0 rgba(0,0,0,.14),0 1px 5px 0 rgba(0,0,0,.12);"></div>
<div class="t" style="left:33.60px;top:791.27px;font-size:20px;letter-spacing:-0.071px;color:#111;">Benutzer verwalten</div>
<div style="position:absolute;left:1673px;top:783px;width:216px;height:36px;border:1px solid #3ba2e1;border-radius:3px;box-sizing:border-box;"></div>
<div class="t" style="left:1690.00px;top:793.87px;font-size:13.5px;letter-spacing:-0.530px;color:#3ba2e1;-webkit-text-stroke:0.35px #3ba2e1;">BENUTZER ERSTELLEN</div>
<svg style="position:absolute;left:1850.00px;top:793.00px;overflow:visible;" width="22.50" height="16.00" viewBox="1 4 22 16" preserveAspectRatio="none"><path fill="#3ba2e1" fill-rule="evenodd" stroke="none" stroke-width="0" d="M15,14C12.33,14 7,15.33 7,18V20H23V18C23,15.33 17.67,14 15,14M6,10V7H4V10H1V12H4V15H6V12H9V10M15,12A4,4 0 0,0 19,8A4,4 0 0,0 15,4A4,4 0 0,0 11,8A4,4 0 0,0 15,12Z"/></svg>
<svg style="position:absolute;left:180.90px;top:850.00px;overflow:visible;" width="10.00" height="10.00" viewBox="3 3.0 18.0 18.0" preserveAspectRatio="none"><path fill="#3ba2e1" fill-rule="evenodd" stroke="none" stroke-width="0" d="M20.71,7.04C21.1,6.65 21.1,6 20.71,5.63L18.37,3.29C18,2.9 17.35,2.9 16.96,3.29L15.12,5.12L18.87,8.87M3,17.25V21H6.75L17.81,9.93L14.06,6.18L3,17.25Z"/></svg>
<div class="t" style="left:194.40px;top:848.44px;font-size:12px;letter-spacing:0.032px;color:#111;-webkit-text-stroke:0.5px #111;">Avatar</div>
<svg style="position:absolute;left:297.80px;top:850.00px;overflow:visible;" width="10.00" height="10.00" viewBox="3 3.0 18.0 18.0" preserveAspectRatio="none"><path fill="#3ba2e1" fill-rule="evenodd" stroke="none" stroke-width="0" d="M20.71,7.04C21.1,6.65 21.1,6 20.71,5.63L18.37,3.29C18,2.9 17.35,2.9 16.96,3.29L15.12,5.12L18.87,8.87M3,17.25V21H6.75L17.81,9.93L14.06,6.18L3,17.25Z"/></svg>
<div class="t" style="left:311.70px;top:848.44px;font-size:12px;letter-spacing:-0.180px;color:#111;-webkit-text-stroke:0.5px #111;">Farbe</div>
<svg style="position:absolute;left:392.80px;top:850.00px;overflow:visible;" width="10.00" height="10.00" viewBox="3 3.0 18.0 18.0" preserveAspectRatio="none"><path fill="#3ba2e1" fill-rule="evenodd" stroke="none" stroke-width="0" d="M20.71,7.04C21.1,6.65 21.1,6 20.71,5.63L18.37,3.29C18,2.9 17.35,2.9 16.96,3.29L15.12,5.12L18.87,8.87M3,17.25V21H6.75L17.81,9.93L14.06,6.18L3,17.25Z"/></svg>
<div class="t" style="left:406.70px;top:848.44px;font-size:12px;letter-spacing:0.117px;color:#111;-webkit-text-stroke:0.5px #111;">E-Mail / Login</div>
<svg style="position:absolute;left:923.00px;top:850.00px;overflow:visible;" width="10.00" height="10.00" viewBox="3 3.0 18.0 18.0" preserveAspectRatio="none"><path fill="#3ba2e1" fill-rule="evenodd" stroke="none" stroke-width="0" d="M20.71,7.04C21.1,6.65 21.1,6 20.71,5.63L18.37,3.29C18,2.9 17.35,2.9 16.96,3.29L15.12,5.12L18.87,8.87M3,17.25V21H6.75L17.81,9.93L14.06,6.18L3,17.25Z"/></svg>
<div class="t" style="left:937.00px;top:848.44px;font-size:12px;letter-spacing:0.090px;color:#111;-webkit-text-stroke:0.5px #111;">Vorname</div>
<svg style="position:absolute;left:1093.00px;top:850.00px;overflow:visible;" width="10.00" height="10.00" viewBox="3 3.0 18.0 18.0" preserveAspectRatio="none"><path fill="#3ba2e1" fill-rule="evenodd" stroke="none" stroke-width="0" d="M20.71,7.04C21.1,6.65 21.1,6 20.71,5.63L18.37,3.29C18,2.9 17.35,2.9 16.96,3.29L15.12,5.12L18.87,8.87M3,17.25V21H6.75L17.81,9.93L14.06,6.18L3,17.25Z"/></svg>
<div class="t" style="left:1107.10px;top:848.44px;font-size:12px;letter-spacing:-0.017px;color:#111;-webkit-text-stroke:0.5px #111;">Nachname</div>
<svg style="position:absolute;left:1309.60px;top:850.00px;overflow:visible;" width="10.00" height="10.00" viewBox="3 3.0 18.0 18.0" preserveAspectRatio="none"><path fill="#3ba2e1" fill-rule="evenodd" stroke="none" stroke-width="0" d="M20.71,7.04C21.1,6.65 21.1,6 20.71,5.63L18.37,3.29C18,2.9 17.35,2.9 16.96,3.29L15.12,5.12L18.87,8.87M3,17.25V21H6.75L17.81,9.93L14.06,6.18L3,17.25Z"/></svg>
<div class="t" style="left:1324.10px;top:848.44px;font-size:12px;letter-spacing:-0.244px;color:#111;-webkit-text-stroke:0.5px #111;">Rollen</div>
<svg style="position:absolute;left:1476.80px;top:850.00px;overflow:visible;" width="10.00" height="10.00" viewBox="3 3.0 18.0 18.0" preserveAspectRatio="none"><path fill="#3ba2e1" fill-rule="evenodd" stroke="none" stroke-width="0" d="M20.71,7.04C21.1,6.65 21.1,6 20.71,5.63L18.37,3.29C18,2.9 17.35,2.9 16.96,3.29L15.12,5.12L18.87,8.87M3,17.25V21H6.75L17.81,9.93L14.06,6.18L3,17.25Z"/></svg>
<div class="t" style="left:1490.70px;top:848.44px;font-size:12px;letter-spacing:0.011px;color:#111;-webkit-text-stroke:0.5px #111;">Berechtigungen</div>
<div class="t" style="left:1724.40px;top:848.44px;font-size:12px;letter-spacing:0.131px;color:#111;-webkit-text-stroke:0.5px #111;">Aktionen</div>
<div style="position:absolute;left:17px;top:878px;width:1888px;height:1px;background:#e0e0e0;"></div>
<div style="position:absolute;left:17px;top:929px;width:1888px;height:1px;background:#e0e0e0;"></div>
<div style="position:absolute;left:17px;top:980px;width:1888px;height:1px;background:#e0e0e0;"></div>
<div style="position:absolute;left:17px;top:1031px;width:1888px;height:1px;background:#e0e0e0;"></div>
<svg style="position:absolute;left:50.60px;top:895.70px;overflow:visible;" width="20.70" height="17.30" viewBox="2 4 20.83 18" preserveAspectRatio="none"><path fill="#3ba2e1" fill-rule="evenodd" stroke="none" stroke-width="0" d="M10 4A4 4 0 0 0 6 8A4 4 0 0 0 10 12A4 4 0 0 0 14 8A4 4 0 0 0 10 4M10 14C5.58 14 2 15.79 2 18V20H11.5A6.5 6.5 0 0 1 11 17.5A6.5 6.5 0 0 1 11.95 14.14C11.32 14.06 10.68 14 10 14M17 12C16.87 12 16.76 12.09 16.74 12.21L16.55 13.53C16.25 13.66 15.96 13.82 15.7 14L14.46 13.5C14.35 13.5 14.22 13.5 14.15 13.63L13.15 15.36C13.09 15.47 13.11 15.6 13.21 15.68L14.27 16.5C14.25 16.67 14.24 16.83 14.24 17C14.24 17.17 14.25 17.33 14.27 17.5L13.21 18.32C13.12 18.4 13.09 18.53 13.15 18.64L14.15 20.37C14.21 20.5 14.34 20.5 14.46 20.5L15.7 20C15.96 20.18 16.24 20.35 16.55 20.47L16.74 21.79C16.76 21.91 16.86 22 17 22H19C19.11 22 19.22 21.91 19.24 21.79L19.43 20.47C19.73 20.34 20 20.18 20.27 20L21.5 20.5C21.63 20.5 21.76 20.5 21.83 20.37L22.83 18.64C22.89 18.53 22.86 18.4 22.77 18.32L21.7 17.5C21.72 17.33 21.74 17.17 21.74 17C21.74 16.83 21.73 16.67 21.7 16.5L22.76 15.68C22.85 15.6 22.88 15.47 22.82 15.36L21.82 13.63C21.76 13.5 21.63 13.5 21.5 13.5L20.27 14C20 13.82 19.73 13.65 19.42 13.53L19.23 12.21C19.22 12.09 19.11 12 19 12H17M18 15.5C18.83 15.5 19.5 16.17 19.5 17C19.5 17.83 18.83 18.5 18 18.5C17.16 18.5 16.5 17.83 16.5 17C16.5 16.17 17.17 15.5 18 15.5Z"/></svg>
<div style="position:absolute;left:188px;top:888px;width:32px;height:32px;background:#d1006a;border-radius:50%;"></div>
<div class="t" style="left:198.68px;top:896.06px;font-size:16px;letter-spacing:0.000px;color:#fff;">P</div>
<div style="position:absolute;left:310px;top:891px;width:20px;height:20px;background:#d1006a;border-radius:3px;"></div>
<div class="t" style="left:392.00px;top:897.00px;font-size:13px;letter-spacing:0.005px;color:#0d0d0d;-webkit-text-stroke:0.2px #0d0d0d;">test.nutzer@assistenz-connect.de</div>
<div class="t" style="left:952.38px;top:897.00px;font-size:13px;letter-spacing:0.000px;color:#0d0d0d;-webkit-text-stroke:0.2px #0d0d0d;">Privat</div>
<div class="t" style="left:1126.71px;top:897.00px;font-size:13px;letter-spacing:0.000px;color:#0d0d0d;-webkit-text-stroke:0.2px #0d0d0d;">Nutzer</div>
<div class="t" style="left:1257.29px;top:897.00px;font-size:13px;letter-spacing:0.000px;color:#0d0d0d;-webkit-text-stroke:0.2px #0d0d0d;">Assistenznehmer</div>
<div class="t" style="left:1470.22px;top:897.00px;font-size:13px;letter-spacing:0.000px;color:#0d0d0d;-webkit-text-stroke:0.2px #0d0d0d;">Planen, Verwalten</div>
<svg style="position:absolute;left:1675px;top:895px" width="18" height="18" viewBox="0 0 18 18"><rect x="0.9" y="0.9" width="16.2" height="16.2" fill="none" stroke="#3ba2e1" stroke-width="1.8"/><rect x="4" y="4" width="2" height="2" fill="#3ba2e1"/><rect x="8" y="4" width="6" height="2" fill="#3ba2e1"/><rect x="4" y="8" width="2" height="2" fill="#3ba2e1"/><rect x="8" y="8" width="6" height="2" fill="#3ba2e1"/><rect x="4" y="12" width="2" height="2" fill="#3ba2e1"/><rect x="8" y="12" width="6" height="2" fill="#3ba2e1"/></svg>
<svg style="position:absolute;left:1737.00px;top:895.00px;overflow:visible;" width="20.70" height="18.00" viewBox="0 2 22.64 20" preserveAspectRatio="none"><path fill="#efb90c" fill-rule="evenodd" stroke="none" stroke-width="0" d="M12.63,2C18.16,2 22.64,6.5 22.64,12C22.64,17.5 18.16,22 12.63,22C9.12,22 6.05,20.18 4.26,17.43L5.84,16.18C7.25,18.47 9.76,20 12.64,20A8,8 0 0,0 20.64,12A8,8 0 0,0 12.64,4C8.56,4 5.2,7.06 4.71,11H7.47L3.73,14.73L0,11H2.69C3.19,5.95 7.45,2 12.63,2M15.59,10.24C16.09,10.25 16.5,10.65 16.5,11.16V15.77C16.5,16.27 16.09,16.69 15.58,16.69H10.05C9.54,16.69 9.13,16.27 9.13,15.77V11.16C9.13,10.65 9.54,10.25 10.04,10.24V9.23C10.04,7.7 11.29,6.46 12.81,6.46C14.34,6.46 15.59,7.7 15.59,9.23V10.24M12.81,7.86C12.06,7.86 11.44,8.47 11.44,9.23V10.24H14.19V9.23C14.19,8.47 13.57,7.86 12.81,7.86Z"/></svg>
<svg style="position:absolute;left:1802.00px;top:896.00px;overflow:visible;transform:scaleX(-1);" width="21.00" height="16.00" viewBox="1 4 22 16" preserveAspectRatio="none"><path fill="#cc4b55" fill-rule="evenodd" stroke="none" stroke-width="0" d="M15,14C12.33,14 7,15.33 7,18V20H23V18C23,15.33 17.67,14 15,14M1,10V12H9V10M15,12A4,4 0 0,0 19,8A4,4 0 0,0 15,4A4,4 0 0,0 11,8A4,4 0 0,0 15,12Z"/></svg>
<svg style="position:absolute;left:50.60px;top:946.70px;overflow:visible;" width="20.70" height="17.30" viewBox="2 4 20.83 18" preserveAspectRatio="none"><path fill="#3ba2e1" fill-rule="evenodd" stroke="none" stroke-width="0" d="M10 4A4 4 0 0 0 6 8A4 4 0 0 0 10 12A4 4 0 0 0 14 8A4 4 0 0 0 10 4M10 14C5.58 14 2 15.79 2 18V20H11.5A6.5 6.5 0 0 1 11 17.5A6.5 6.5 0 0 1 11.95 14.14C11.32 14.06 10.68 14 10 14M17 12C16.87 12 16.76 12.09 16.74 12.21L16.55 13.53C16.25 13.66 15.96 13.82 15.7 14L14.46 13.5C14.35 13.5 14.22 13.5 14.15 13.63L13.15 15.36C13.09 15.47 13.11 15.6 13.21 15.68L14.27 16.5C14.25 16.67 14.24 16.83 14.24 17C14.24 17.17 14.25 17.33 14.27 17.5L13.21 18.32C13.12 18.4 13.09 18.53 13.15 18.64L14.15 20.37C14.21 20.5 14.34 20.5 14.46 20.5L15.7 20C15.96 20.18 16.24 20.35 16.55 20.47L16.74 21.79C16.76 21.91 16.86 22 17 22H19C19.11 22 19.22 21.91 19.24 21.79L19.43 20.47C19.73 20.34 20 20.18 20.27 20L21.5 20.5C21.63 20.5 21.76 20.5 21.83 20.37L22.83 18.64C22.89 18.53 22.86 18.4 22.77 18.32L21.7 17.5C21.72 17.33 21.74 17.17 21.74 17C21.74 16.83 21.73 16.67 21.7 16.5L22.76 15.68C22.85 15.6 22.88 15.47 22.82 15.36L21.82 13.63C21.76 13.5 21.63 13.5 21.5 13.5L20.27 14C20 13.82 19.73 13.65 19.42 13.53L19.23 12.21C19.22 12.09 19.11 12 19 12H17M18 15.5C18.83 15.5 19.5 16.17 19.5 17C19.5 17.83 18.83 18.5 18 18.5C17.16 18.5 16.5 17.83 16.5 17C16.5 16.17 17.17 15.5 18 15.5Z"/></svg>
<div style="position:absolute;left:188px;top:939px;width:32px;height:32px;background:#1f24d6;border-radius:50%;"></div>
<div class="t" style="left:198.64px;top:947.06px;font-size:16px;letter-spacing:0.000px;color:#fff;">A</div>
<div style="position:absolute;left:310px;top:942px;width:20px;height:20px;background:#1f24d6;border-radius:3px;"></div>
<div class="t" style="left:392.00px;top:948.00px;font-size:13px;letter-spacing:-0.051px;color:#0d0d0d;-webkit-text-stroke:0.2px #0d0d0d;">471.Assistenz.Geber@assistenz-connect.de</div>
<div class="t" style="left:929.96px;top:948.00px;font-size:13px;letter-spacing:0.000px;color:#0d0d0d;-webkit-text-stroke:0.2px #0d0d0d;">Assistenz</div>
<div class="t" style="left:1128.86px;top:948.00px;font-size:13px;letter-spacing:0.000px;color:#0d0d0d;-webkit-text-stroke:0.2px #0d0d0d;">Geber</div>
<div class="t" style="left:1301.36px;top:948.00px;font-size:13px;letter-spacing:0.000px;color:#0d0d0d;-webkit-text-stroke:0.2px #0d0d0d;">Assistenz</div>
<div class="t" style="left:1511.43px;top:948.00px;font-size:13px;letter-spacing:0.000px;color:#0d0d0d;-webkit-text-stroke:0.2px #0d0d0d;">Assistieren</div>
<svg style="position:absolute;left:1675px;top:946px" width="18" height="18" viewBox="0 0 18 18"><rect x="0.9" y="0.9" width="16.2" height="16.2" fill="none" stroke="#3ba2e1" stroke-width="1.8"/><rect x="4" y="4" width="2" height="2" fill="#3ba2e1"/><rect x="8" y="4" width="6" height="2" fill="#3ba2e1"/><rect x="4" y="8" width="2" height="2" fill="#3ba2e1"/><rect x="8" y="8" width="6" height="2" fill="#3ba2e1"/><rect x="4" y="12" width="2" height="2" fill="#3ba2e1"/><rect x="8" y="12" width="6" height="2" fill="#3ba2e1"/></svg>
<svg style="position:absolute;left:1737.00px;top:946.00px;overflow:visible;" width="20.70" height="18.00" viewBox="0 2 22.64 20" preserveAspectRatio="none"><path fill="#efb90c" fill-rule="evenodd" stroke="none" stroke-width="0" d="M12.63,2C18.16,2 22.64,6.5 22.64,12C22.64,17.5 18.16,22 12.63,22C9.12,22 6.05,20.18 4.26,17.43L5.84,16.18C7.25,18.47 9.76,20 12.64,20A8,8 0 0,0 20.64,12A8,8 0 0,0 12.64,4C8.56,4 5.2,7.06 4.71,11H7.47L3.73,14.73L0,11H2.69C3.19,5.95 7.45,2 12.63,2M15.59,10.24C16.09,10.25 16.5,10.65 16.5,11.16V15.77C16.5,16.27 16.09,16.69 15.58,16.69H10.05C9.54,16.69 9.13,16.27 9.13,15.77V11.16C9.13,10.65 9.54,10.25 10.04,10.24V9.23C10.04,7.7 11.29,6.46 12.81,6.46C14.34,6.46 15.59,7.7 15.59,9.23V10.24M12.81,7.86C12.06,7.86 11.44,8.47 11.44,9.23V10.24H14.19V9.23C14.19,8.47 13.57,7.86 12.81,7.86Z"/></svg>
<svg style="position:absolute;left:1802.00px;top:947.00px;overflow:visible;transform:scaleX(-1);" width="21.00" height="16.00" viewBox="1 4 22 16" preserveAspectRatio="none"><path fill="#b3000c" fill-rule="evenodd" stroke="none" stroke-width="0" d="M15,14C12.33,14 7,15.33 7,18V20H23V18C23,15.33 17.67,14 15,14M1,10V12H9V10M15,12A4,4 0 0,0 19,8A4,4 0 0,0 15,4A4,4 0 0,0 11,8A4,4 0 0,0 15,12Z"/></svg>
<svg style="position:absolute;left:50.60px;top:997.70px;overflow:visible;" width="20.70" height="17.30" viewBox="2 4 20.83 18" preserveAspectRatio="none"><path fill="#3ba2e1" fill-rule="evenodd" stroke="none" stroke-width="0" d="M10 4A4 4 0 0 0 6 8A4 4 0 0 0 10 12A4 4 0 0 0 14 8A4 4 0 0 0 10 4M10 14C5.58 14 2 15.79 2 18V20H11.5A6.5 6.5 0 0 1 11 17.5A6.5 6.5 0 0 1 11.95 14.14C11.32 14.06 10.68 14 10 14M17 12C16.87 12 16.76 12.09 16.74 12.21L16.55 13.53C16.25 13.66 15.96 13.82 15.7 14L14.46 13.5C14.35 13.5 14.22 13.5 14.15 13.63L13.15 15.36C13.09 15.47 13.11 15.6 13.21 15.68L14.27 16.5C14.25 16.67 14.24 16.83 14.24 17C14.24 17.17 14.25 17.33 14.27 17.5L13.21 18.32C13.12 18.4 13.09 18.53 13.15 18.64L14.15 20.37C14.21 20.5 14.34 20.5 14.46 20.5L15.7 20C15.96 20.18 16.24 20.35 16.55 20.47L16.74 21.79C16.76 21.91 16.86 22 17 22H19C19.11 22 19.22 21.91 19.24 21.79L19.43 20.47C19.73 20.34 20 20.18 20.27 20L21.5 20.5C21.63 20.5 21.76 20.5 21.83 20.37L22.83 18.64C22.89 18.53 22.86 18.4 22.77 18.32L21.7 17.5C21.72 17.33 21.74 17.17 21.74 17C21.74 16.83 21.73 16.67 21.7 16.5L22.76 15.68C22.85 15.6 22.88 15.47 22.82 15.36L21.82 13.63C21.76 13.5 21.63 13.5 21.5 13.5L20.27 14C20 13.82 19.73 13.65 19.42 13.53L19.23 12.21C19.22 12.09 19.11 12 19 12H17M18 15.5C18.83 15.5 19.5 16.17 19.5 17C19.5 17.83 18.83 18.5 18 18.5C17.16 18.5 16.5 17.83 16.5 17C16.5 16.17 17.17 15.5 18 15.5Z"/></svg>
<div style="position:absolute;left:188px;top:990px;width:32px;height:32px;background:#88dbdf;border-radius:50%;"></div>
<div class="t" style="left:198.64px;top:998.06px;font-size:16px;letter-spacing:0.000px;color:#111;">A</div>
<div style="position:absolute;left:310px;top:993px;width:20px;height:20px;background:#88dbdf;border-radius:3px;"></div>
<div class="t" style="left:392.00px;top:999.00px;font-size:13px;letter-spacing:-0.053px;color:#0d0d0d;-webkit-text-stroke:0.2px #0d0d0d;">472.Assistenz.Geber Zwei@assistenz-connect.de</div>
<div class="t" style="left:929.96px;top:999.00px;font-size:13px;letter-spacing:0.000px;color:#0d0d0d;-webkit-text-stroke:0.2px #0d0d0d;">Assistenz</div>
<div class="t" style="left:1097.79px;top:999.00px;font-size:13px;letter-spacing:0.000px;color:#0d0d0d;-webkit-text-stroke:0.2px #0d0d0d;">Geber Zwei</div>
<div class="t" style="left:1301.36px;top:999.00px;font-size:13px;letter-spacing:0.000px;color:#0d0d0d;-webkit-text-stroke:0.2px #0d0d0d;">Assistenz</div>
<div class="t" style="left:1511.43px;top:999.00px;font-size:13px;letter-spacing:0.000px;color:#0d0d0d;-webkit-text-stroke:0.2px #0d0d0d;">Assistieren</div>
<svg style="position:absolute;left:1675px;top:997px" width="18" height="18" viewBox="0 0 18 18"><rect x="0.9" y="0.9" width="16.2" height="16.2" fill="none" stroke="#3ba2e1" stroke-width="1.8"/><rect x="4" y="4" width="2" height="2" fill="#3ba2e1"/><rect x="8" y="4" width="6" height="2" fill="#3ba2e1"/><rect x="4" y="8" width="2" height="2" fill="#3ba2e1"/><rect x="8" y="8" width="6" height="2" fill="#3ba2e1"/><rect x="4" y="12" width="2" height="2" fill="#3ba2e1"/><rect x="8" y="12" width="6" height="2" fill="#3ba2e1"/></svg>
<svg style="position:absolute;left:1737.00px;top:997.00px;overflow:visible;" width="20.70" height="18.00" viewBox="0 2 22.64 20" preserveAspectRatio="none"><path fill="#efb90c" fill-rule="evenodd" stroke="none" stroke-width="0" d="M12.63,2C18.16,2 22.64,6.5 22.64,12C22.64,17.5 18.16,22 12.63,22C9.12,22 6.05,20.18 4.26,17.43L5.84,16.18C7.25,18.47 9.76,20 12.64,20A8,8 0 0,0 20.64,12A8,8 0 0,0 12.64,4C8.56,4 5.2,7.06 4.71,11H7.47L3.73,14.73L0,11H2.69C3.19,5.95 7.45,2 12.63,2M15.59,10.24C16.09,10.25 16.5,10.65 16.5,11.16V15.77C16.5,16.27 16.09,16.69 15.58,16.69H10.05C9.54,16.69 9.13,16.27 9.13,15.77V11.16C9.13,10.65 9.54,10.25 10.04,10.24V9.23C10.04,7.7 11.29,6.46 12.81,6.46C14.34,6.46 15.59,7.7 15.59,9.23V10.24M12.81,7.86C12.06,7.86 11.44,8.47 11.44,9.23V10.24H14.19V9.23C14.19,8.47 13.57,7.86 12.81,7.86Z"/></svg>
<svg style="position:absolute;left:1802.00px;top:998.00px;overflow:visible;transform:scaleX(-1);" width="21.00" height="16.00" viewBox="1 4 22 16" preserveAspectRatio="none"><path fill="#b3000c" fill-rule="evenodd" stroke="none" stroke-width="0" d="M15,14C12.33,14 7,15.33 7,18V20H23V18C23,15.33 17.67,14 15,14M1,10V12H9V10M15,12A4,4 0 0,0 19,8A4,4 0 0,0 15,4A4,4 0 0,0 11,8A4,4 0 0,0 15,12Z"/></svg>
<svg style="position:absolute;left:50.60px;top:1048.70px;overflow:visible;" width="20.70" height="17.30" viewBox="2 4 20.83 18" preserveAspectRatio="none"><path fill="#3ba2e1" fill-rule="evenodd" stroke="none" stroke-width="0" d="M10 4A4 4 0 0 0 6 8A4 4 0 0 0 10 12A4 4 0 0 0 14 8A4 4 0 0 0 10 4M10 14C5.58 14 2 15.79 2 18V20H11.5A6.5 6.5 0 0 1 11 17.5A6.5 6.5 0 0 1 11.95 14.14C11.32 14.06 10.68 14 10 14M17 12C16.87 12 16.76 12.09 16.74 12.21L16.55 13.53C16.25 13.66 15.96 13.82 15.7 14L14.46 13.5C14.35 13.5 14.22 13.5 14.15 13.63L13.15 15.36C13.09 15.47 13.11 15.6 13.21 15.68L14.27 16.5C14.25 16.67 14.24 16.83 14.24 17C14.24 17.17 14.25 17.33 14.27 17.5L13.21 18.32C13.12 18.4 13.09 18.53 13.15 18.64L14.15 20.37C14.21 20.5 14.34 20.5 14.46 20.5L15.7 20C15.96 20.18 16.24 20.35 16.55 20.47L16.74 21.79C16.76 21.91 16.86 22 17 22H19C19.11 22 19.22 21.91 19.24 21.79L19.43 20.47C19.73 20.34 20 20.18 20.27 20L21.5 20.5C21.63 20.5 21.76 20.5 21.83 20.37L22.83 18.64C22.89 18.53 22.86 18.4 22.77 18.32L21.7 17.5C21.72 17.33 21.74 17.17 21.74 17C21.74 16.83 21.73 16.67 21.7 16.5L22.76 15.68C22.85 15.6 22.88 15.47 22.82 15.36L21.82 13.63C21.76 13.5 21.63 13.5 21.5 13.5L20.27 14C20 13.82 19.73 13.65 19.42 13.53L19.23 12.21C19.22 12.09 19.11 12 19 12H17M18 15.5C18.83 15.5 19.5 16.17 19.5 17C19.5 17.83 18.83 18.5 18 18.5C17.16 18.5 16.5 17.83 16.5 17C16.5 16.17 17.17 15.5 18 15.5Z"/></svg>
<div style="position:absolute;left:188px;top:1041px;width:32px;height:32px;background:#94c8d4;border-radius:50%;"></div>
<div class="t" style="left:198.64px;top:1049.06px;font-size:16px;letter-spacing:0.000px;color:#111;">A</div>
<div style="position:absolute;left:310px;top:1044px;width:20px;height:20px;background:#94c8d4;border-radius:3px;"></div>
<div class="t" style="left:392.00px;top:1050.00px;font-size:13px;letter-spacing:-0.072px;color:#0d0d0d;-webkit-text-stroke:0.2px #0d0d0d;">473.Assistenz.Geber Drei@assistenz-connect.de</div>
<div class="t" style="left:929.96px;top:1050.00px;font-size:13px;letter-spacing:0.000px;color:#0d0d0d;-webkit-text-stroke:0.2px #0d0d0d;">Assistenz</div>
<div class="t" style="left:1101.43px;top:1050.00px;font-size:13px;letter-spacing:0.000px;color:#0d0d0d;-webkit-text-stroke:0.2px #0d0d0d;">Geber Drei</div>
<div class="t" style="left:1301.36px;top:1050.00px;font-size:13px;letter-spacing:0.000px;color:#0d0d0d;-webkit-text-stroke:0.2px #0d0d0d;">Assistenz</div>
<div class="t" style="left:1511.43px;top:1050.00px;font-size:13px;letter-spacing:0.000px;color:#0d0d0d;-webkit-text-stroke:0.2px #0d0d0d;">Assistieren</div>
<svg style="position:absolute;left:1675px;top:1048px" width="18" height="18" viewBox="0 0 18 18"><rect x="0.9" y="0.9" width="16.2" height="16.2" fill="none" stroke="#3ba2e1" stroke-width="1.8"/><rect x="4" y="4" width="2" height="2" fill="#3ba2e1"/><rect x="8" y="4" width="6" height="2" fill="#3ba2e1"/><rect x="4" y="8" width="2" height="2" fill="#3ba2e1"/><rect x="8" y="8" width="6" height="2" fill="#3ba2e1"/><rect x="4" y="12" width="2" height="2" fill="#3ba2e1"/><rect x="8" y="12" width="6" height="2" fill="#3ba2e1"/></svg>
<svg style="position:absolute;left:1737.00px;top:1048.00px;overflow:visible;" width="20.70" height="18.00" viewBox="0 2 22.64 20" preserveAspectRatio="none"><path fill="#efb90c" fill-rule="evenodd" stroke="none" stroke-width="0" d="M12.63,2C18.16,2 22.64,6.5 22.64,12C22.64,17.5 18.16,22 12.63,22C9.12,22 6.05,20.18 4.26,17.43L5.84,16.18C7.25,18.47 9.76,20 12.64,20A8,8 0 0,0 20.64,12A8,8 0 0,0 12.64,4C8.56,4 5.2,7.06 4.71,11H7.47L3.73,14.73L0,11H2.69C3.19,5.95 7.45,2 12.63,2M15.59,10.24C16.09,10.25 16.5,10.65 16.5,11.16V15.77C16.5,16.27 16.09,16.69 15.58,16.69H10.05C9.54,16.69 9.13,16.27 9.13,15.77V11.16C9.13,10.65 9.54,10.25 10.04,10.24V9.23C10.04,7.7 11.29,6.46 12.81,6.46C14.34,6.46 15.59,7.7 15.59,9.23V10.24M12.81,7.86C12.06,7.86 11.44,8.47 11.44,9.23V10.24H14.19V9.23C14.19,8.47 13.57,7.86 12.81,7.86Z"/></svg>
<svg style="position:absolute;left:1802.00px;top:1049.00px;overflow:visible;transform:scaleX(-1);" width="21.00" height="16.00" viewBox="1 4 22 16" preserveAspectRatio="none"><path fill="#b3000c" fill-rule="evenodd" stroke="none" stroke-width="0" d="M15,14C12.33,14 7,15.33 7,18V20H23V18C23,15.33 17.67,14 15,14M1,10V12H9V10M15,12A4,4 0 0,0 19,8A4,4 0 0,0 15,4A4,4 0 0,0 11,8A4,4 0 0,0 15,12Z"/></svg>
</body></html>
